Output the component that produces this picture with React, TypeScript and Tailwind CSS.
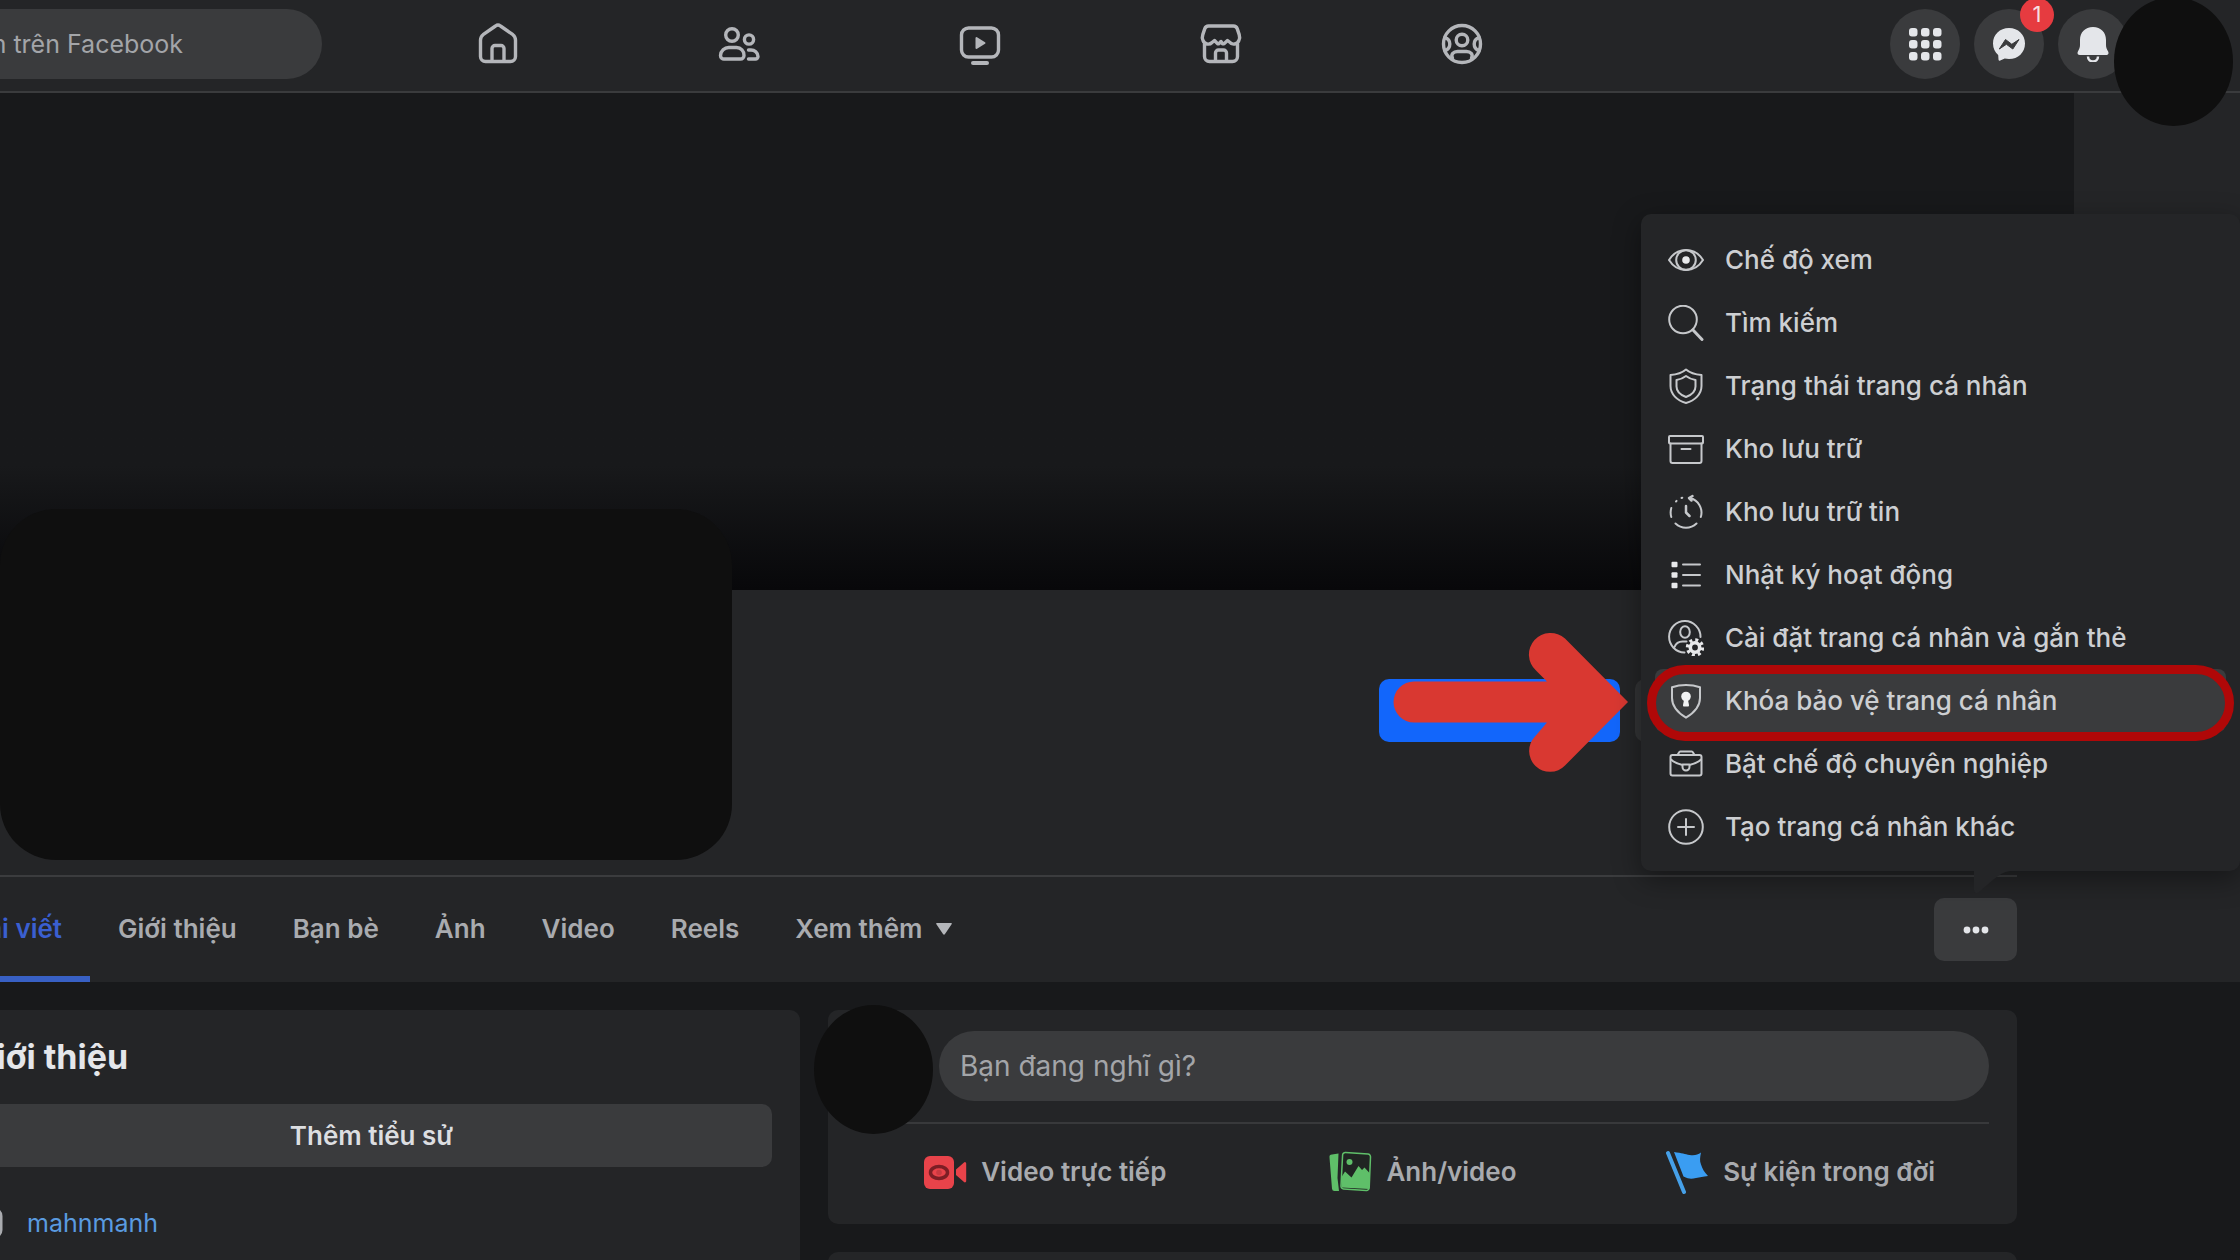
import type { ReactNode } from 'react';

type IconProps = { children: ReactNode };

function NavIcon({ children }: IconProps) {
  return (
    <svg viewBox="0 0 44 44" className="size-11" fill="none" stroke="#b4b6ba" strokeWidth="3.400" strokeLinecap="round" strokeLinejoin="round" aria-hidden="true">
      {children}
    </svg>
  );
}

function MenuIcon({ children }: IconProps) {
  return (
    <svg viewBox="0 0 36 36" className="size-9 shrink-0" fill="none" stroke="#c6c8cb" strokeWidth="2" strokeLinecap="round" strokeLinejoin="round" aria-hidden="true">
      {children}
    </svg>
  );
}

const navItems = [
  {
    label: 'Trang chủ',
    icon: (
      <NavIcon>
        <path d="M4.500 18a7 7 0 0 1 2.600-5.300L19.500 4a4.200 4.200 0 0 1 5 0l12.400 8.700a7 7 0 0 1 2.600 5.300V34.500a5 5 0 0 1-5 5h-25a5 5 0 0 1-5-5z" />
        <path d="M16 39V26.500a3 3 0 0 1 3-3h6a3 3 0 0 1 3 3V39" />
      </NavIcon>
    ),
  },
  {
    label: 'Bạn bè',
    icon: (
      <NavIcon>
        <circle cx="15" cy="13" r="6.300" />
        <circle cx="32" cy="17.500" r="4.600" />
        <path d="M12 25.500h7.500a7.500 7.500 0 0 1 7.500 8 3.500 3.500 0 0 1-3.500 3.500h-16A3.500 3.500 0 0 1 3.500 33.500a8.300 8.300 0 0 1 8.500-8z" />
        <path d="M31.500 28H34a7 7 0 0 1 7 6.500 2.500 2.500 0 0 1-2.500 2.500H31.500" />
      </NavIcon>
    ),
  },
  {
    label: 'Video',
    icon: (
      <NavIcon>
        <rect x="3.500" y="6" width="37" height="29" rx="7" />
        <path d="M18.500 16v10l8-5z" fill="#b4b6ba" strokeWidth="2" />
        <path d="M15 41h14" strokeWidth="4" />
      </NavIcon>
    ),
  },
  {
    label: 'Marketplace',
    icon: (
      <NavIcon>
        <path d="M9.500 4h25a4 4 0 0 1 3.700 2.600l2 6a8 8 0 0 1-.3 5.800 5.400 5.400 0 0 1-9.400 1.600l-2-1.500-3.500 3.200h-1.500L22 19.500l-2 2.200h-1.500L15.500 18.500 13 20.500a5.400 5.400 0 0 1-9-2.100 8 8 0 0 1-.200-5.800l2-6A4 4 0 0 1 9.500 4z" />
        <path d="M5.500 22v12.500a5 5 0 0 0 5 5h23a5 5 0 0 0 5-5V22" />
        <path d="M16.500 39V31a3 3 0 0 1 3-3h5a3 3 0 0 1 3 3v8" />
      </NavIcon>
    ),
  },
  {
    label: 'Nhóm',
    icon: (
      <NavIcon>
        <circle cx="22" cy="22" r="18.500" />
        <circle cx="22" cy="18" r="5.800" />
        <path d="M5 15.500a6.800 6.800 0 0 1 0 13M39 15.500a6.800 6.800 0 0 0 0 13" />
        <path d="M12.500 36c-2-3.500 1-6.500 5-6.500h9c4 0 7 3 5 6.500" />
      </NavIcon>
    ),
  },
];

const menuItems = [
  {
    label: 'Chế độ xem',
    icon: (
      <MenuIcon>
        <path d="M1 18C5 11.500 11 8 18 8s13 3.500 17 10c-4 6.500-10 10-17 10S5 24.500 1 18z" />
        <circle cx="18" cy="18" r="9.800" />
        <circle cx="18" cy="18" r="3.800" fill="#e8e9eb" stroke="none" />
      </MenuIcon>
    ),
  },
  {
    label: 'Tìm kiếm',
    icon: (
      <MenuIcon>
        <circle cx="15" cy="14.500" r="13.800" />
        <path d="M25 25 34 34.500" strokeWidth="3" />
      </MenuIcon>
    ),
  },
  {
    label: 'Trạng thái trang cá nhân',
    icon: (
      <MenuIcon>
        <path d="M18 1.500C21.500 4.500 27 6.500 33.500 7v11c0 8-6.500 14.500-15.500 17C9 32.500 2.500 26 2.500 18V7C9 6.500 14.500 4.500 18 1.500z" />
        <path d="M18 8c2.500 2 6 3.500 9.500 4v6.500c0 4.500-4 8.500-9.500 10.500-5.500-2-9.500-6-9.500-10.500V12C12 11.500 15.500 10 18 8z" />
      </MenuIcon>
    ),
  },
  {
    label: 'Kho lưu trữ',
    icon: (
      <MenuIcon>
        <rect x="1" y="5" width="34" height="7.500" rx="1" />
        <path d="M2.500 12.500V30a2 2 0 0 0 2 2h27a2 2 0 0 0 2-2V12.500M13.500 18h9" />
      </MenuIcon>
    ),
  },
  {
    label: 'Kho lưu trữ tin',
    icon: (
      <MenuIcon>
        <path d="M22 4a15 15 0 0 1 10.800 19M28.500 29.500a15.200 15.200 0 0 1-21 0M3.300 23a15.500 15.500 0 0 1 0-9" />
        <path d="M8 7.500l.6-.6M13.500 4l.8-.3" />
        <path d="M24.500 2 21 4l2.500 2.500" strokeWidth="2.500" />
        <path d="M18 12v6.500l3.500 3.500" strokeWidth="2.500" />
      </MenuIcon>
    ),
  },
  {
    label: 'Nhật ký hoạt động',
    icon: (
      <MenuIcon>
        <path d="M15 7.500h17M15 18h17M15 28.500h17" />
        <g fill="#e8e9eb" stroke="none">
          <rect x="3.500" y="4.700" width="6" height="5.600" rx="1" />
          <rect x="3.500" y="15.200" width="6" height="5.600" rx="1" />
          <rect x="3.500" y="25.700" width="6" height="5.600" rx="1" />
        </g>
      </MenuIcon>
    ),
  },
  {
    label: 'Cài đặt trang cá nhân và gắn thẻ',
    icon: (
      <MenuIcon>
        <path d="M32.500 17A15.700 15.700 0 1 0 16.500 32.500" />
        <ellipse cx="17" cy="12" rx="4.800" ry="5.800" />
        <path d="M6.500 27c1.500-4 4.500-5.500 8-5.500h4" />
        <circle cx="27" cy="27.500" r="4.700" stroke="#e8e9eb" strokeWidth="3.600" />
        <circle cx="27" cy="27.500" r="7.600" stroke="#e8e9eb" strokeWidth="3.200" strokeDasharray="3 2.970" strokeLinecap="butt" />
      </MenuIcon>
    ),
  },
  {
    label: 'Khóa bảo vệ trang cá nhân',
    active: true,
    icon: (
      <MenuIcon>
        <path d="M4 4.200c4.500-1.500 9-2.200 14-2.200s9.500.7 14 2.200V15c0 8.500-5.500 14.500-14 19.700C9.500 29.500 4 23.500 4 15z" />
        <circle cx="18" cy="13.500" r="4.800" fill="#f1f2f3" stroke="none" />
        <path d="M18 15v5" stroke="#f1f2f3" strokeWidth="4" />
        <path d="M16 17h4l1 5q.3 1.500-1 1.500h-4q-1.300 0-1-1.500z" fill="#f1f2f3" stroke="none" />
      </MenuIcon>
    ),
  },
  {
    label: 'Bật chế độ chuyên nghiệp',
    icon: (
      <MenuIcon>
        <rect x="2.500" y="9" width="31" height="20.500" rx="2" />
        <path d="M9.500 9 11 6.500a1.500 1.500 0 0 1 1.400-1h11.200a1.500 1.500 0 0 1 1.400 1L26.500 9M3 13.500c3 3 7 4.500 11.500 5.500M33 13.500c-3 3-7 4.500-11.500 5.500M14.500 18.500h7v2.500a3.500 3.500 0 0 1-7 0z" />
      </MenuIcon>
    ),
  },
  {
    label: 'Tạo trang cá nhân khác',
    icon: (
      <MenuIcon>
        <circle cx="18" cy="18" r="16.800" />
        <path d="M18 10v16M10 18h16" />
      </MenuIcon>
    ),
  },
];

const tabs = ['Bài viết', 'Giới thiệu', 'Bạn bè', 'Ảnh', 'Video', 'Reels'];

const postActions = [
  {
    label: 'Video trực tiếp',
    icon: (
      <svg viewBox="0 0 44 44" className="size-11" aria-hidden="true">
        <rect x="1" y="6" width="30" height="33" rx="6" fill="#e8434a" />
        <path d="M33 19.500 41 12.500a1.300 1.300 0 0 1 2.200 1v17.500a1.300 1.300 0 0 1-2.200 1L33 25z" fill="#e8434a" />
        <ellipse cx="16" cy="22.500" rx="8.500" ry="6" fill="none" stroke="#7d1e25" strokeWidth="3.500" />
        <circle cx="16" cy="22.500" r="2.800" fill="#c93a41" />
      </svg>
    ),
  },
  {
    label: 'Ảnh/video',
    icon: (
      <svg viewBox="0 0 44 44" className="size-11" aria-hidden="true">
        <path d="M4 4.500 10.500 3.500 9.500 28 11 41H6.500a2.500 2.500 0 0 1-2.500-2.200L1.500 7.500a2.600 2.600 0 0 1 2.500-3z" fill="#5fbf69" />
        <path d="M17.500 2.500 40 4a2.700 2.700 0 0 1 2.500 2.900l-1.300 31a2.700 2.700 0 0 1-2.900 2.500L15.500 39a2.700 2.700 0 0 1-2.500-2.900L14.600 5a2.700 2.700 0 0 1 2.900-2.500z" fill="#202422" stroke="#5fbf69" strokeWidth="1.500" />
        <path d="M13.500 27 17 21.500 23.500 27.500 30.500 16l3.500 4 2.500-2.500 5.500 6-1 15.500-27.500-1.500z" fill="#5fbf69" />
        <circle cx="21.500" cy="12" r="3" fill="#5fbf69" />
      </svg>
    ),
  },
  {
    label: 'Sự kiện trong đời',
    icon: (
      <svg viewBox="0 0 44 44" className="size-11" aria-hidden="true">
        <path d="M3 3 19 42" stroke="#46a0e8" strokeWidth="4" strokeLinecap="round" />
        <path d="M9 2c8 1 11 2 15.500 3 5 .8 8 0 11.500-2.500-1 5-1.500 8 0 12 1.500 4.500 3.500 8 7 11.500-5 .8-8 1-12 2-4.500 1-7 1.200-12.500-1.500z" fill="#3a9df2" />
      </svg>
    ),
  },
];

function Header() {
  return (
    <header className="relative z-20 flex h-[93px] border-b-2 border-[#3a3b3d] bg-[#242527] pr-28 pb-1">
      <input
        type="search"
        aria-label="Tìm kiếm trên Facebook"
        placeholder="Tìm kiếm trên Facebook"
        className="-ml-40 h-[70px] w-[482px] self-center rounded-full bg-[#3a3b3d] pl-[59px] text-[25px] text-white placeholder:text-[#a3a5a9]"
      />
      <nav className="mr-[308px] ml-14 flex flex-1" aria-label="Chính">
        {navItems.map((item) => (
          <a key={item.label} href="#" aria-label={item.label} className="flex flex-1 items-center justify-center">
            {item.icon}
          </a>
        ))}
      </nav>
      <div className="flex items-center gap-3.5">
        <button aria-label="Menu" className="flex size-[70px] items-center justify-center rounded-full bg-[#3a3b3d]">
          <svg viewBox="0 0 34 34" className="size-[34px]" fill="#e4e6ea" aria-hidden="true">
            {[1, 13, 25].map((y) => [1, 13, 25].map((x) => <rect key={x + '-' + y} x={x} y={y} width="8.500" height="8.500" rx="3" />))}
          </svg>
        </button>
        <button aria-label="Messenger" className="relative flex size-[70px] items-center justify-center rounded-full bg-[#3a3b3d]">
          <svg viewBox="0 0 34 34" className="size-[34px]" aria-hidden="true">
            <path d="M17 1C7.800 1 1 7.600 1 16.500c0 4.700 2 8.700 5.200 11.400l.3 4.600c.1 1 1 1.500 1.800 1.100l4.400-2c1.400.3 2.800.5 4.300.5 9.200 0 16-6.700 16-15.600S26.200 1 17 1z" fill="#e4e6ea" />
            <path d="M7.300 22 13.500 12.500 19.800 17.300 27 12.500 20.800 22 14.400 17.300z" fill="#3a3b3d" stroke="#3a3b3d" strokeLinejoin="round" />
          </svg>
          <span className="absolute -top-[11px] -right-[10px] flex size-[34px] items-center justify-center rounded-full bg-[#e63b40] text-[22px] text-[#f6dfe0]">1</span>
        </button>
        <button aria-label="Thông báo" className="flex size-[70px] items-center justify-center rounded-full bg-[#3a3b3d]">
          <svg viewBox="0 0 34 36" className="h-9 w-[34px]" fill="#e4e6ea" aria-hidden="true">
            <path d="M17 1C9 1 4 6.500 4 14v5c0 2.500-.8 4-2 6.200C.8 27.500 1.800 29 4 29h26c2.200 0 3.200-1.500 2-3.800-1.200-2.200-2-3.700-2-6.200v-5C30 6.500 25 1 17 1z" />
            <path d="M12 30.500a5 5 0 0 0 10 0" fill="none" stroke="#e4e6ea" strokeWidth="2.500" />
          </svg>
        </button>
      </div>
      <div className="absolute -top-[3px] right-[7px] h-[129px] w-[119px] rounded-[50%] bg-[#0f0f0f]" />
    </header>
  );
}

function ProfileMenu() {
  return (
    <div role="menu" className="absolute -right-[223px] bottom-full z-10 mb-[27px] w-[599px] rounded-[10px] bg-[#242527] px-3.5 pt-3.5 pb-[13px] shadow-[0_8px_28px_rgba(0,0,0,0.4)]">
      {menuItems.map((item) => (
        <button
          key={item.label}
          role="menuitem"
          className={
            item.active
              ? 'relative flex h-[63px] w-full items-center gap-[21px] rounded-lg bg-[#3a3b3d] px-[13px]'
              : 'flex h-[63px] w-full items-center gap-[21px] rounded-lg px-[13px]'
          }
        >
          {item.icon}
          <span className="text-[26px] leading-8 font-medium whitespace-nowrap text-[#cdcfd2]">{item.label}</span>
          {item.active && <span className="absolute -top-1 -right-2 -bottom-[9px] -left-2 rounded-full border-[9px] border-[#b00808]" />}
        </button>
      ))}
      <svg viewBox="0 0 36 22" className="absolute top-full right-[230px] h-[22px] w-9" fill="#242527" aria-hidden="true">
        <path d="M0 0h36C24 2 16 12 5 21q-4 3-5-2z" />
      </svg>
    </div>
  );
}

function ProfileHead() {
  return (
    <section className="relative bg-[#242527]">
      <div className="mr-[166px] h-[497px] bg-linear-to-b from-[#18191b] from-75% to-[#08080a]" />
      <div className="mr-[223px] flex h-[287px] justify-end border-b-2 border-[#3b3c3e] pt-[89px]">
        <div className="relative mr-[15px] h-[63px] w-[241px]">
          <button aria-label="Thêm vào tin" className="size-full rounded-[10px] bg-[#1266fb]" />
          <svg viewBox="0 0 236 140" className="absolute -top-[47px] left-3.5 h-[140px] w-[236px]" fill="#d93831" aria-hidden="true">
            <path d="M21 49.500H154L143 38.500A20.500 20.500 0 0 1 172 6.500L235 70 172 133.500A20.500 20.500 0 0 1 142 104.500L154 90.500H21a20.500 20.500 0 0 1 0-41z" />
          </svg>
        </div>
        <button aria-label="Chỉnh sửa trang cá nhân" className="h-[63px] w-[382px] rounded-[10px] bg-[#333436]" />
      </div>
      <div className="absolute top-[416px] left-0 h-[351px] w-[732px] rounded-[56px] bg-[#0f0f0f]" />
      <div className="mr-[223px] flex h-[105px] items-center justify-between">
        <nav className="-ml-[58px] flex h-full" aria-label="Trang cá nhân">
          {tabs.map((tab, i) => (
            <a
              key={tab}
              href="#"
              className={
                i === 0
                  ? 'flex items-center border-b-[6px] border-[#3860c4] px-7 pt-1 text-[26px] font-semibold whitespace-nowrap text-[#3a5fd0]'
                  : 'flex items-center px-7 pb-0.5 text-[26px] font-semibold whitespace-nowrap text-[#a9abaf]'
              }
            >
              {tab}
            </a>
          ))}
          <button className="flex items-center gap-3.5 px-7 pb-0.5 text-[26px] font-semibold whitespace-nowrap text-[#a9abaf]">
            Xem thêm
            <svg viewBox="0 0 16 12" className="h-3 w-4" fill="#b4b6ba" aria-hidden="true">
              <path d="M1 0h14q1.500 0 .6 1.300L9 11q-1 1.500-2 0L.4 1.300Q-.5 0 1 0z" />
            </svg>
          </button>
        </nav>
        <div className="relative">
          <button aria-label="Tùy chọn khác" className="flex h-[63px] w-[83px] items-center justify-center rounded-[10px] bg-[#3a3b3d]">
            <svg viewBox="0 0 26 8" className="h-2 w-[26px]" fill="#e4e6ea" aria-hidden="true">
              <circle cx="4" cy="4" r="3.400" />
              <circle cx="13" cy="4" r="3.400" />
              <circle cx="22" cy="4" r="3.400" />
            </svg>
          </button>
          <ProfileMenu />
        </div>
      </div>
    </section>
  );
}

function IntroCard() {
  return (
    <section className="h-[300px] w-[857px] shrink-0 rounded-[10px] bg-[#242527] px-7 pt-6">
      <h2 className="text-[34px] leading-[46px] font-bold text-[#e4e6ea]">Giới thiệu</h2>
      <button className="mt-6 flex h-[63px] w-full items-center justify-center rounded-[10px] bg-[#3a3b3d] text-[26px] font-semibold text-[#dcdee1]">Thêm tiểu sử</button>
      <div className="mt-[38px] flex items-center gap-6">
        <svg viewBox="0 0 32 32" className="size-8" fill="none" stroke="#a9abaf" strokeWidth="3" aria-hidden="true">
          <rect x="2" y="2" width="28" height="28" rx="7" />
          <circle cx="16" cy="16" r="6" />
        </svg>
        <a href="#" className="text-[25px] leading-9 text-[#5a9be0]">mahnmanh</a>
      </div>
    </section>
  );
}

function Composer() {
  return (
    <section className="relative rounded-[10px] bg-[#242527] px-7 pt-[21px] pb-[22px]">
      <div className="border-b-2 border-[#38393b] pb-[21px] pl-[83px]">
        <input
          aria-label="Bạn đang nghĩ gì?"
          placeholder="Bạn đang nghĩ gì?"
          className="h-[70px] w-full rounded-full bg-[#3a3b3d] px-[21px] text-[28px] text-white placeholder:text-[#a3a5a9]"
        />
      </div>
      <div className="grid grid-cols-3 pt-[17px]">
        {postActions.map((action) => (
          <button key={action.label} className="flex h-[61px] items-center justify-center gap-3.5 text-[26px] font-semibold whitespace-nowrap text-[#a9abaf]">
            {action.icon}
            {action.label}
          </button>
        ))}
      </div>
      <div className="absolute -top-[5px] -left-3.5 h-[129px] w-[119px] rounded-[50%] bg-[#0f0f0f]" />
    </section>
  );
}

export default function App() {
  return (
    <div className="h-screen overflow-hidden bg-[#18191b] font-['Inter','Noto_Sans',sans-serif]">
      <Header />
      <main>
        <ProfileHead />
        <div className="mr-[223px] -ml-[57px] flex gap-7 pt-7">
          <IntroCard />
          <div className="flex flex-1 flex-col gap-7">
            <Composer />
            <section className="h-24 rounded-[10px] bg-[#242527]" aria-label="Bài viết" />
          </div>
        </div>
      </main>
    </div>
  );
}
